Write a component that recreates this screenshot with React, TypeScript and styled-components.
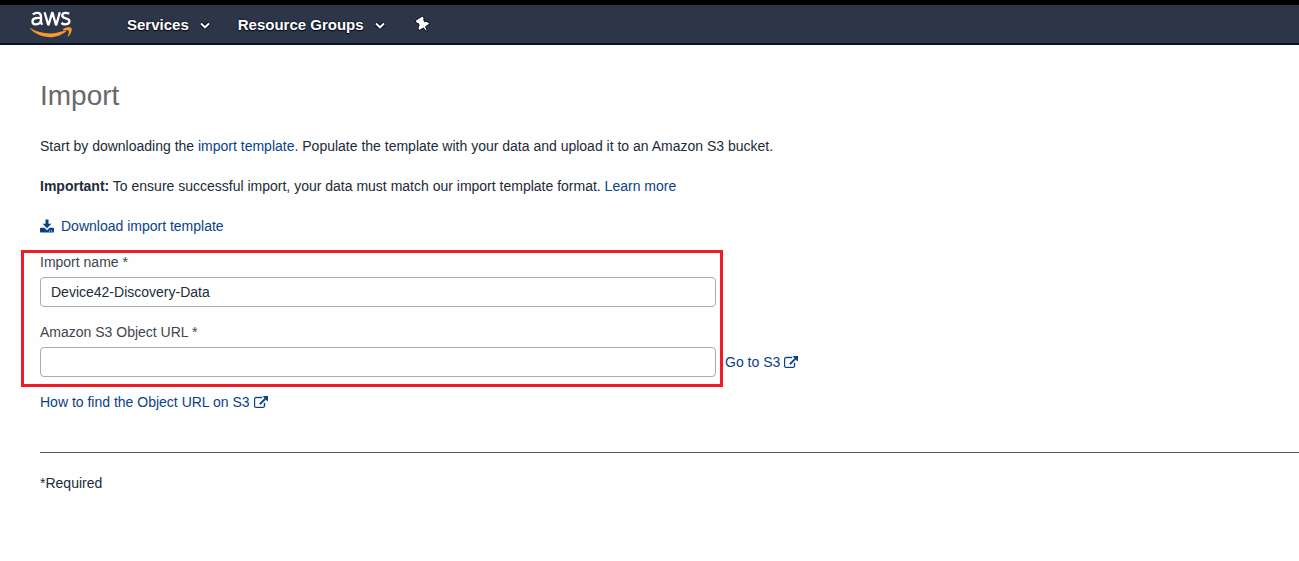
import React, { useState } from 'react';
import styled, { createGlobalStyle } from 'styled-components';

const GlobalStyle = createGlobalStyle`
  *, *::before, *::after { box-sizing: border-box; }
  body {
    margin: 0;
    background: #fefefe;
    color: #222b37;
    font-family: "Liberation Sans", Arial, sans-serif;
    font-size: 14px;
    line-height: 20px;
  }
`;

const NavBar = styled.header`
  display: flex;
  align-items: center;
  height: 45px;
  padding: 0 30px;
  border-top: 5px solid #000;
  border-bottom: 2px solid #0b1226;
  background: #2d3548;
`;

const LogoLink = styled.a`
  display: flex;
  margin-right: 54px;
`;

const NavMenu = styled.nav`
  display: flex;
  align-items: center;
  gap: 28px;
  padding-top: 2px;
`;

const NavButton = styled.button`
  display: flex;
  align-items: center;
  gap: 11px;
  padding: 0;
  border: 0;
  background: none;
  color: #fff;
  font: bold 15px/20px "Liberation Sans", Arial, sans-serif;
  text-shadow: 0 0 2px #050b1c, 0 1px 1px #050b1c;
  cursor: pointer;
`;

const Main = styled.main`
  padding: 34px 0 40px 40px;
`;

const Title = styled.h1`
  margin: 0 0 23px;
  color: #666a6e;
  font-size: 28px;
  font-weight: normal;
  line-height: 34px;
`;

const Text = styled.p`
  margin: 0 0 20px;
`;

const Link = styled.a`
  color: #0a4287;
  text-decoration: none;
  &:hover { text-decoration: underline; }
`;

const IconLink = styled(Link)<{ $gap: number }>`
  display: inline-flex;
  align-items: center;
  gap: ${({ $gap }) => $gap}px;
`;

const FormRow = styled.div`
  display: flex;
  align-items: flex-end;
  gap: 2px;
  margin: 12px 0 5px -19px;
`;

const Highlight = styled.div`
  flex: 0 1 702px;
  display: grid;
  gap: 16px;
  padding: 0 4px 7px 16px;
  border: 3px solid #ee1c25;
`;

const Field = styled.div`
  display: grid;
  gap: 6px;
`;

const Label = styled.label`
  color: #40464e;
  line-height: 18px;
`;

const TextInput = styled.input`
  width: 100%;
  height: 30px;
  padding: 0 10px;
  border: 1px solid #acacac;
  border-radius: 4px;
  background: #fff;
  color: #222b37;
  font: inherit;
`;

const BesideField = styled.div`
  display: flex;
  padding-bottom: 15px;
`;

const Divider = styled.hr`
  margin: 40px 0 20px;
  border: 0;
  border-top: 1px solid #55585c;
`;

const AwsLogo = () => (
  <svg width="43" height="27" viewBox="0 0 43 27" role="img" aria-label="AWS home" fill="none">
    <g stroke="#fff" strokeWidth="2.3" strokeLinejoin="round">
      <path d="M2.8 3.400C4.200 2.300 5.800 1.900 7.300 1.900c2.500 0 3.700 1.100 3.700 3.500v6.200l1.200 2.200" />
      <path d="M11 7.100C5.400 6.400 2.500 7.600 2.500 10.400c0 1.800 1.200 2.900 3 2.900 2.700 0 5.500-1.500 5.500-4.300" />
      <path d="M14.600 1.300l3.500 12.200h.6L22 2h.6l3.200 11.500h.6l3.400-12.200" />
      <path d="M39.200 2.800c-1-.6-2-.9-3.400-.9-2.200 0-3.600 1-3.600 2.700 0 3.900 7.200 1.900 7.200 5.500 0 1.900-1.500 3.200-3.800 3.200-1.600 0-3.100-.4-4.200-1.300" />
    </g>
    <path fill="#f79a2b" d="M.5 17.200C6 20.500 12.800 22.400 20 22.400c5.300 0 10.500-1.100 15.300-3.100.8-.3 1.400.5.700 1.100-4.200 3.300-10 5.800-15.800 5.800C12.600 26.200 5.500 23.300.2 17.800c-.4-.4-.1-.8.3-.6z" />
    <path fill="#f79a2b" d="M33.200 17.900c2.400-1.700 7.200-2.100 8.200-.9 1 1.300-.3 6.100-2.900 8.200-.5.4-.9.1-.7-.4.700-1.700 1.600-4.200 1-5-.6-.8-3.600-.8-5.200-.6-.6 0-.8-.9-.4-1.300z" />
  </svg>
);

const ChevronIcon = () => (
  <svg width="10" height="7" viewBox="0 0 10 7" aria-hidden="true" fill="none">
    <path d="M1 1.500l4 3.800 4-3.800" stroke="#050b1c" strokeWidth="4" />
    <path d="M1 1.500l4 3.800 4-3.800" stroke="#fff" strokeWidth="2" />
  </svg>
);

const PinIcon = () => (
  <svg width="20" height="18" viewBox="0 0 20 18" aria-hidden="true">
    <g
      fill="#fff"
      stroke="#050b1c"
      strokeWidth="1.5"
      strokeLinejoin="round"
      paintOrder="stroke"
      transform="translate(2 1) rotate(-32 8 8)"
    >
      <path d="M4 .6h8v2.700h-1.100v3.200c1.700.5 3 1.800 3 3.800H9L8 15.600l-1-5.300H2.100c0-2 1.300-3.300 3-3.800V3.300H4z" />
    </g>
  </svg>
);

const DownloadIcon = () => (
  <svg width="14" height="14" viewBox="0 0 14 14" aria-hidden="true" fill="currentColor">
    <path d="M5.500.5h3v4.200h2.900L7 9.200 2.600 4.700h2.900z" />
    <path
      fillRule="evenodd"
      d="M.7 8.700h3.700L7 11.200l2.600-2.500h3.700c.4 0 .7.3.7.7v3.400c0 .4-.3.700-.7.700H.7c-.4 0-.7-.3-.7-.7V9.400c0-.4.3-.7.7-.7zM9.100 11.400v1h1v-1zm2.200 0v1h1v-1z"
    />
  </svg>
);

const ExternalIcon = () => (
  <svg width="14" height="12" viewBox="0 0 1792 1536" aria-hidden="true" fill="currentColor">
    <path
      stroke="currentColor"
      strokeWidth="50"
      d="M1408 928v320q0 119-84.500 203.500T1120 1536H288q-119 0-203.500-84.500T0 1248V416q0-119 84.500-203.500T288 128h704q14 0 23 9t9 23v64q0 14-9 23t-23 9H288q-66 0-113 47t-47 113v832q0 66 47 113t113 47h832q66 0 113-47t47-113V928q0-14 9-23t23-9h64q14 0 23 9t9 23zm384-864v512q0 26-19 45t-45 19-45-19l-176-176-652 652q-10 10-23 10t-23-10L718 983q-10-10-10-23t10-23l652-652-176-176q-19-19-19-45t19-45 45-19h512q26 0 45 19t19 45z"
    />
  </svg>
);

export default function App() {
  const [name, setName] = useState('Device42-Discovery-Data');
  const [url, setUrl] = useState('');

  return (
    <>
      <GlobalStyle />
      <NavBar>
        <LogoLink href="#">
          <AwsLogo />
        </LogoLink>
        <NavMenu>
          <NavButton type="button">
            Services
            <ChevronIcon />
          </NavButton>
          <NavButton type="button">
            Resource Groups
            <ChevronIcon />
          </NavButton>
          <NavButton type="button" aria-label="Pin shortcuts">
            <PinIcon />
          </NavButton>
        </NavMenu>
      </NavBar>
      <Main>
        <Title>Import</Title>
        <Text>
          Start by downloading the <Link href="#">import template</Link>. Populate the template with
          your data and upload it to an Amazon S3 bucket.
        </Text>
        <Text>
          <strong>Important:</strong> To ensure successful import, your data must match our import
          template format. <Link href="#">Learn more</Link>
        </Text>
        <IconLink href="#" $gap={7}>
          <DownloadIcon />
          Download import template
        </IconLink>
        <FormRow>
          <Highlight>
            <Field>
              <Label htmlFor="import-name">Import name *</Label>
              <TextInput
                id="import-name"
                type="text"
                value={name}
                onChange={(e) => setName(e.target.value)}
              />
            </Field>
            <Field>
              <Label htmlFor="object-url">Amazon S3 Object URL *</Label>
              <TextInput
                id="object-url"
                type="text"
                value={url}
                onChange={(e) => setUrl(e.target.value)}
              />
            </Field>
          </Highlight>
          <BesideField>
            <IconLink href="#" $gap={4}>
              Go to S3
              <ExternalIcon />
            </IconLink>
          </BesideField>
        </FormRow>
        <IconLink href="#" $gap={4}>
          How to find the Object URL on S3
          <ExternalIcon />
        </IconLink>
        <Divider />
        <Text>*Required</Text>
      </Main>
    </>
  );
}
